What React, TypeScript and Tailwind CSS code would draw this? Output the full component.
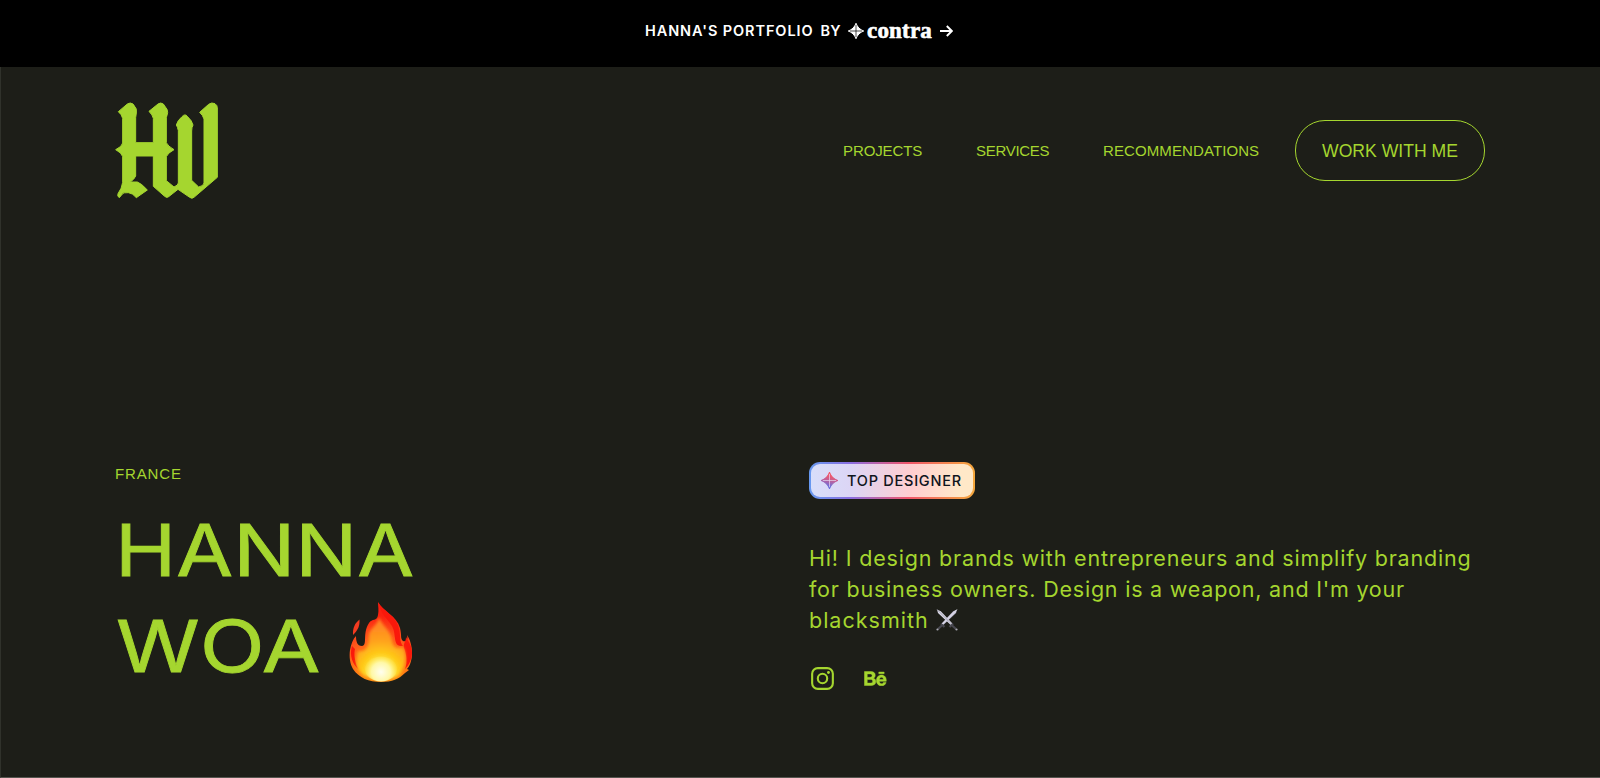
import React from "react";

const Sparkle = ({ className, fill, line }: { className: string; fill: string; line: string }) => (
  <svg viewBox="0 0 16 16" className={className} aria-hidden="true">
    <defs>
      <linearGradient id="sparkle" x1="0.6" y1="0" x2="0.4" y2="1">
        <stop offset="0.2" stopColor="#f0566a" />
        <stop offset="0.5" stopColor="#c0609a" />
        <stop offset="0.85" stopColor="#6c70dc" />
      </linearGradient>
    </defs>
    <path d="M8 .3C9.3 4 12 6.7 15.7 8C12 9.3 9.3 12 8 15.7C6.7 12 4 9.3 .3 8C4 6.7 6.7 4 8 .3Z" fill={fill} stroke={fill} strokeWidth="1" strokeLinejoin="round" />
    <path d="M8 1.8V14.2M1.8 8H14.2" stroke={line} strokeWidth="0.7" />
  </svg>
);

const Logo = () => (
  <svg viewBox="45 35 309 294" className="h-[98px] w-[103px]" aria-label="HW" fill="#a5d62f" stroke="#a5d62f" strokeWidth="3" strokeLinejoin="round">
    <path d="M55 64L82 41Q91 35 99 41Q113 56 109 68L107 82V157H160V84Q158 74 147 63L174 41Q182 35 190 41L201 57Q206 64 199 82V157Q203 167 222 178Q203 188 199 199V271L222 290Q234 285 235 278V121Q233 110 229 104Q232 91 246 79Q255 69 262 78Q276 91 279 104Q275 111 275 122V270L296 290Q311 287 312 278V86Q309 75 299 66L326 42Q335 35 345 40Q352 45 352 52V261L283 320Q276 327 269 321L234 297L206 319Q200 324 194 318L160 288V197H107V257Q103 267 91 275H112Q124 279 142 299L109 322Q98 308 85 307Q69 306 67 311L58 322Q51 318 54 310Q66 294 68 276V199Q66 188 47 178Q66 169 68 158V84Q65 72 55 64Z" />
  </svg>
);

const Flame = () => (
  <svg viewBox="0 0 64 82" className="-mt-[9px] h-[82px] w-[64px]" aria-label="fire">
    <defs>
      <radialGradient id="outer" gradientUnits="userSpaceOnUse" cx="32" cy="73" r="58">
        <stop offset="0.3" stopColor="#ff8a10" />
        <stop offset="0.65" stopColor="#ff5a1c" />
        <stop offset="1" stopColor="#fb2010" />
      </radialGradient>
      <radialGradient id="inner" gradientUnits="userSpaceOnUse" cx="32" cy="71" r="46">
        <stop offset="0" stopColor="#fff8d0" />
        <stop offset="0.2" stopColor="#fff060" />
        <stop offset="0.4" stopColor="#ffcc18" />
        <stop offset="0.7" stopColor="#ffa01c" />
        <stop offset="1" stopColor="#ff8822" />
      </radialGradient>
      <radialGradient id="core" gradientUnits="userSpaceOnUse" cx="32" cy="71" r="19">
        <stop offset="0" stopColor="#fffef0" />
        <stop offset="0.5" stopColor="#fff8a8" />
        <stop offset="1" stopColor="#ffe030" stopOpacity="0" />
      </radialGradient>
      <filter id="soften" x="-10%" y="-10%" width="120%" height="120%">
        <feGaussianBlur stdDeviation="1.5" />
      </filter>
    </defs>
    <path d="M29 1C34 10 48 15 51 27C53 35 51 37 54 40C58 41 59 38 58 34C61 38 63 45 63 52C63 59 61 65 58 68L60 69L56 72C50 78 43 81 32 81C20 81 10 77 4 68C1 63 0 56 1 49C2 43 4 38 7 35C7 40 8 45 13 45C19 44 13 33 20 22C23 17 28 21 29 14C30 9 29 5 29 1Z" fill="url(#outer)" />
    <path d="M57 36C59 40 63 44 63 52C63 59 59 65 56 68C59 61 57 52 55 47C54 42 57 41 57 36ZM29.5 2C35 11 48 16 50 28C52 36 50 40 54 45C43 46 48 34 43 25C39 18 32 14 29.5 2ZM3 45C0 55 4 63 9 68C5 58 5 52 6 48Z" fill="#fa180b" />
    <path d="M10.500 18.500C6 22 3.500 27 4 34C8 30 11 26 10.500 18.500Z" fill="#f43b20" />
    <path d="M30 16C32 24 42 29 43 40C44 48 50 48 54 46C58 53 57 66 50 74C42 80 21 80 12 72C6 65 7 57 9 50C19 52 20 42 20 35C20 27 29 25 30 16Z" fill="url(#inner)" filter="url(#soften)" />
    <ellipse cx="32" cy="68" rx="16" ry="12.500" fill="url(#core)" />
  </svg>
);

const Swords = () => (
  <svg viewBox="0 0 22 22" className="ml-[7px] inline-block h-[22px] w-[22px] align-[-3px]" aria-label="crossed swords">
    <path d="M5 14.500L8.500 18M2 20L7 15.500M17 14.500L13.500 18M20 20L15 15.500" stroke="#484850" strokeWidth="2.2" />
    <path d="M1 0.500L4.800 2.200L16.200 14.300L14.500 15.700L2 4Z" fill="#dcdbe9" />
    <path d="M21 0.500L17.200 2.200L5.800 14.300L7.500 15.700L20 4Z" fill="#c6c4d8" />
    <path d="M21 0.500L6.500 15" stroke="#f2f0fa" strokeWidth="0.7" />
    <path d="M1 0.500L15.500 15" stroke="#8f8d9c" strokeWidth="0.7" />
    <circle cx="1.500" cy="20.500" r="1.1" fill="#aaa9b3" />
    <circle cx="20.500" cy="20.500" r="1.1" fill="#aaa9b3" />
  </svg>
);

export default function App() {
  return (
    <div className="flex h-[778px] w-full flex-col overflow-hidden bg-[#1d1e18] font-['Liberation_Sans',sans-serif] text-[#a5d62f]">
      <div className="flex h-[67px] shrink-0 items-center bg-black pb-[6px] pl-[645px] text-white">
        <span className="flex w-[203px] gap-[7px] whitespace-nowrap font-['Inter',sans-serif] text-[14.5px] font-semibold leading-5 tracking-[0.9px]">
          <span>HANNA'S PORTFOLIO</span>
          <span className="tracking-[0.2px]">BY</span>
        </span>
        <Sparkle className="h-[16px] w-[16px]" fill="#ffffff" line="#000000" />
        <span className="ml-[3px] w-[73px] font-['Liberation_Serif',serif] text-[23px] font-bold leading-5 tracking-[0.2px] [-webkit-text-stroke:0.6px_white]">contra</span>
        <svg viewBox="0 0 13 12" className="h-[12px] w-[13px]" fill="none" stroke="white" strokeWidth="1.9" aria-hidden="true">
          <path d="M0 6H11.500M6.800 1L11.800 6L6.800 11" />
        </svg>
      </div>

      <main className="flex flex-1 flex-col border-b border-l border-b-[#55554f] border-l-[#30322b]">
        <header className="flex h-[167px] items-center justify-between pl-[114px] pr-[115px]">
          <Logo />
          <nav className="flex items-center text-[15px] leading-[18px]">
            <a className="w-[133px] whitespace-nowrap pt-[1px] tracking-[-0.1px]">PROJECTS</a>
            <a className="w-[127px] whitespace-nowrap pt-[1px] tracking-[-0.3px]">SERVICES</a>
            <a className="w-[192px] whitespace-nowrap pt-[1px] tracking-[0.1px]">RECOMMENDATIONS</a>
            <a className="flex h-[61px] w-[190px] items-center justify-center whitespace-nowrap rounded-[30px] border border-[#a5d62f] pt-[1px] text-[17.6px]">WORK WITH ME</a>
          </nav>
        </header>

        <section className="grid flex-1 grid-cols-[694px_1fr] pl-[114px] pt-[228px]">
          <div>
            <p className="text-[15px] leading-6 tracking-[0.85px]">FRANCE</p>
            <h1 className="mt-[16px] font-['Inter',sans-serif] text-[72px] leading-[96px] [-webkit-text-stroke:0.8px_#a5d62f]">
              <span className="block w-fit origin-left scale-x-[1.145]">HANNA</span>
              <span className="flex items-center">
                <span className="w-[234px] pl-[1px]">
                  <span className="block w-fit origin-left scale-x-[1.18]">WOA</span>
                </span>
                <Flame />
              </span>
            </h1>
          </div>
          <div>
            <div className="flex h-[37px] w-[166px] items-center rounded-[11px] bg-[linear-gradient(90deg,#6699f0_0%,#8a6de0_25%,#f0566a_60%,#f5a83c_100%)] p-[2px]">
              <div className="flex h-full w-full items-center rounded-[9px] bg-[linear-gradient(90deg,#d8defa_0%,#dcd5f5_25%,#ffced0_62%,#ffe8c8_92%)] pl-[10px] text-[#10151c]">
                <Sparkle className="h-[17px] w-[17px]" fill="url(#sparkle)" line="#e3d3ee" />
                <span className="ml-[9px] whitespace-nowrap pt-[1px] font-['Inter',sans-serif] text-[14.5px] font-medium tracking-[0.75px]">TOP DESIGNER</span>
              </div>
            </div>
            <p className="mt-[44px] whitespace-nowrap font-['Inter',sans-serif] text-[21.5px] leading-[31px] tracking-[0.82px]">
              Hi! I design brands with entrepreneurs and simplify branding
              <br />
              <span className="tracking-[0.78px]">for business owners. Design is a weapon, and I'm your</span>
              <br />
              <span className="tracking-[1px]">blacksmith</span>
              <Swords />
            </p>
            <div className="mt-[31px] flex items-center gap-[30px] pl-[2px]">
              <svg viewBox="0 0 24 24" className="h-[23px] w-[23px]" fill="none" stroke="#a5d62f" strokeWidth="2.2" aria-label="Instagram">
                <rect x="1.2" y="1.2" width="21.6" height="21.6" rx="5.9" />
                <circle cx="12" cy="12" r="4.9" />
                <circle cx="18.200" cy="5.800" r="1.5" fill="#a5d62f" stroke="none" />
              </svg>
              <svg viewBox="0 0 24 16" className="h-[15px] w-[23px]" fill="#a5d62f" fillRule="evenodd" stroke="#a5d62f" strokeWidth="0.5" aria-label="Behance">
                <path d="M.2 .6H7C10 .6 11.700 2 11.700 4.500C11.700 6 11 7.100 9.800 7.700C11.600 8.300 12.400 9.600 12.400 11.300C12.400 14 10.200 15.500 7.200 15.500H.2ZM3.200 3.100V6.700H6.300C7.700 6.700 8.400 6.100 8.400 4.900C8.400 3.700 7.700 3.100 6.300 3.100ZM3.200 9V12.900H6.600C8.200 12.900 9 12.200 9 10.900C9 9.600 8.100 9 6.600 9Z" />
                <path d="M18.300 4.300C21.800 4.300 23.800 6.800 23.500 11H16.100C16.200 12.700 17.100 13.500 18.500 13.500C19.500 13.500 20.200 13 20.500 12.200H23.300C22.600 14.600 20.900 15.800 18.400 15.800C15.100 15.800 13 13.500 13 10.100C13 6.800 15.100 4.300 18.300 4.300ZM16.200 9H20.500C20.300 7.400 19.600 6.600 18.400 6.600C17.100 6.600 16.400 7.500 16.200 9ZM15.500 1.100H21.200V2.900H15.500Z" />
              </svg>
            </div>
          </div>
        </section>
      </main>
    </div>
  );
}
